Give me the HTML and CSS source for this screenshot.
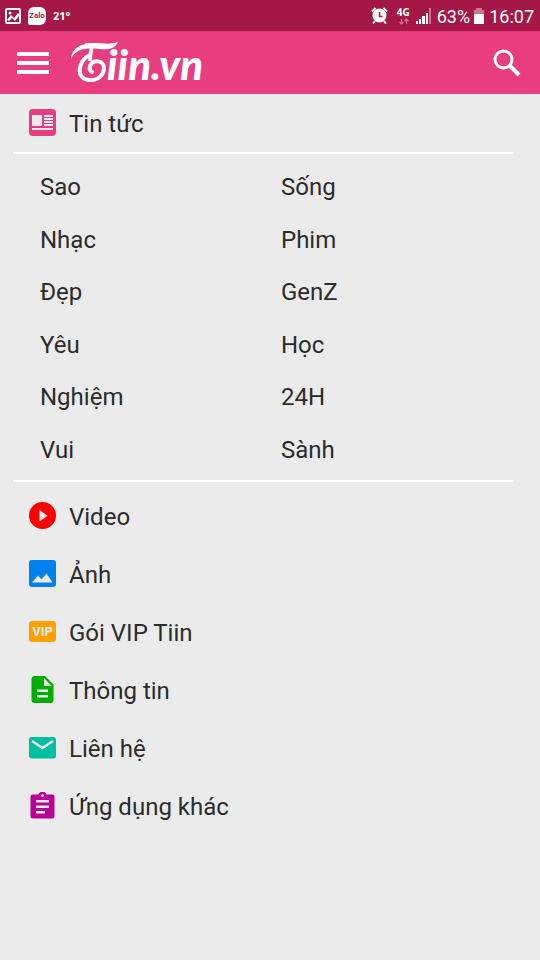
FILE: index.html
```html
<!DOCTYPE html>
<html lang="vi">
<head>
<meta charset="utf-8">
<meta name="viewport" content="width=device-width, initial-scale=1">
<title>Tiin.vn</title>
<link rel="stylesheet" href="styles.css">
</head>
<body>
<div class="status">
  <svg class="status-photo" viewBox="0 0 16 16" width="16" height="16" aria-hidden="true"><rect x="1" y="1" width="14" height="14" rx="1" fill="none" stroke="#fff" stroke-width="2"/><circle cx="5" cy="5" r="1.500" fill="#fff"/><path d="M2 12l4-5 3 3 4-5 1 1v2l-4 5-3-3-3 3z" fill="#fff"/></svg>
  <span class="zalo">Zalo</span>
  <span class="temp">21°</span>
  <span class="spacer"></span>
  <svg class="alarm" viewBox="0 0 17 17" width="17" height="17" aria-hidden="true"><circle cx="8.500" cy="8.500" r="7" fill="#fff"/><path d="M1 4.500L4.500 1M16 4.500L12.500 1M4 14l-2 2.500M13 14l2 2.500" stroke="#fff" stroke-width="2" fill="none"/><path d="M8.500 5v4.500h3" stroke="#a51747" stroke-width="1.500" fill="none"/></svg>
  <span class="network">4G
    <svg viewBox="0 0 12 7" width="12" height="7" aria-hidden="true"><path d="M3.500 1v5M1.500 4l2 2 2-2M8.500 6V1M6.500 3l2-2 2 2" stroke="#cb7794" stroke-width="1.200" fill="none"/></svg>
  </span>
  <svg class="signal" viewBox="0 0 16 16" width="16" height="16" aria-hidden="true"><path fill="#fff" d="M0 13h2v3H0zM3 11h2v5H3zM6 8h3v8H6zM10 5h2v11h-2z"/><path fill="#cb7794" d="M13 0h2v16h-2z"/></svg>
  <span class="level">63%</span>
  <svg class="battery" viewBox="0 0 10 16" width="10" height="16" aria-hidden="true"><path fill="#cb7794" d="M2 0h6v2h2v5H0V2h2z"/><path fill="#fff" d="M0 6h10v10H0z"/></svg>
  <span class="clock">16:07</span>
</div>
<header class="bar">
  <button class="icon-button" type="button" aria-label="Menu"><svg viewBox="0 0 32 22" width="32" height="22"><path fill="#fff" d="M0 0h32v4H0zM0 9h32v4H0zM0 18h32v4H0z"/></svg></button>
  <a class="logo" href="#">
    <svg viewBox="0 0 136 50" width="136" height="50" aria-label="Tiin.vn">
      <path fill="#fff" d="M1 21C2 9 12 6 22 5c10 0 18 2 26-1-3 7-10 8-19 7C17 10 6 10 1 21z"/>
      <path d="M20 17C8 22 5 41 19 42c10 1 15-6 15-12 0-8-11-9-14-2-1 3 0 5 2 6" fill="none" stroke="#fff" stroke-width="4" stroke-linecap="round"/>
      <text class="logo-initial" x="14" y="23">T</text>
      <text class="logo-text" x="37" y="42">iin.vn</text>
    </svg>
  </a>
  <button class="icon-button" type="button" aria-label="Tìm kiếm"><svg viewBox="0 0 28 28" width="28" height="28"><circle cx="10.500" cy="10.500" r="8.500" fill="none" stroke="#fff" stroke-width="3"/><path d="M16.500 16.500l9.500 9.500" stroke="#fff" stroke-width="4"/></svg></button>
</header>
<main>
  <nav>
    <a class="row" href="#"><svg viewBox="0 0 27 27" width="27" height="27"><rect width="27" height="27" rx="4" fill="#e83b80"/><path fill="#ebebeb" d="M3 6h10v11H3zM15 6h9v2h-9zM15 9h9v2h-9zM15 12h9v2h-9zM15 15h9v2h-9zM3 19h21v2H3z"/></svg>Tin tức</a>
    <div class="topics">
      <a href="#">Sao</a><a href="#">Sống</a>
      <a href="#">Nhạc</a><a href="#">Phim</a>
      <a href="#">Đẹp</a><a href="#">GenZ</a>
      <a href="#">Yêu</a><a href="#">Học</a>
      <a href="#">Nghiệm</a><a href="#">24H</a>
      <a href="#">Vui</a><a href="#">Sành</a>
    </div>
    <div class="sections">
      <a class="row" href="#"><svg viewBox="0 0 27 27" width="27" height="27"><circle cx="13.500" cy="13.500" r="13.500" fill="#f00"/><path d="M10.500 8v11.500l8-5.700z" fill="#ebebeb"/></svg>Video</a>
      <a class="row" href="#"><svg viewBox="0 0 27 27" width="27" height="27"><rect width="27" height="27" rx="3" fill="#0080ed"/><path d="M3 22.500l6-7 3.500 4 5-6 6 9z" fill="#ebebeb"/></svg>Ảnh</a>
      <a class="row" href="#"><svg viewBox="0 0 27 27" width="27" height="27"><rect y="3" width="27" height="21" rx="3" fill="#ffa000"/><text class="vip" x="13.500" y="18" text-anchor="middle">VIP</text></svg>Gói VIP Tiin</a>
      <a class="row" href="#"><svg viewBox="0 0 27 27" width="27" height="27"><path d="M5 0h11l8.500 8.500V24a3 3 0 0 1-3 3h-16a3 3 0 0 1-3-3V3a3 3 0 0 1 2.500-3z" fill="#00ae00"/><path d="M15 2v8h7.500zM8 13.500h11v2.500H8zM8 19h11v2.500H8z" fill="#ebebeb"/></svg>Thông tin</a>
      <a class="row" href="#"><svg viewBox="0 0 27 27" width="27" height="27"><rect y="3" width="27" height="21.500" rx="3" fill="#00bfa0"/><path d="M3 7l10.500 7L24 7" fill="none" stroke="#ebebeb" stroke-width="2.400"/></svg>Liên hệ</a>
      <a class="row" href="#"><svg viewBox="0 0 27 27" width="27" height="27"><path d="M4 2.500h5.500a4.200 4.200 0 0 1 8 0H23a2.500 2.500 0 0 1 2.500 2.500v19a2.500 2.500 0 0 1-2.500 2.500H4A2.500 2.500 0 0 1 1.500 24V5A2.500 2.500 0 0 1 4 2.500z" fill="#ba0097"/><circle cx="13.500" cy="3.700" r="1.400" fill="#ebebeb"/><path d="M7 8h13v2.500H7zM7 13.500h13V16H7zM7 19h9v2.500H7z" fill="#ebebeb"/></svg>Ứng dụng khác</a>
    </div>
  </nav>
</main>
</body>
</html>
```
FILE: styles.css
```css
* { box-sizing: border-box; }

body {
  margin: 0;
  min-height: 100vh;
  background: #ebebeb;
  color: #2b2b2b;
  font-family: Roboto, "Noto Sans", sans-serif;
  font-size: 24px;
  line-height: 28px;
}

a { color: inherit; text-decoration: none; }
svg { display: block; flex: none; }

.status {
  display: flex;
  align-items: center;
  height: 31px;
  padding: 0 6px 0 5px;
  background: #a51747;
  color: #fff;
  font-size: 18px;
  line-height: 24px;
}

.zalo {
  margin: 0 7px;
  width: 18px;
  height: 18px;
  border-radius: 6px 6px 6px 2px;
  background: #fff;
  color: #a51747;
  font-size: 8px;
  font-weight: 700;
  line-height: 17px;
  text-align: center;
}

.temp { font: 700 11px/16px "Open Sans", sans-serif; }
.spacer { flex: 1; }

.network {
  margin: 0 6px 0 9px;
  font: 700 10px/10px "Open Sans", sans-serif;
}

.network svg { margin: 1px 0 0 1px; }
.level { margin: 2px 4px 0 5px; }
.clock { margin: 2px 0 0 5px; }

.bar {
  display: flex;
  align-items: center;
  height: 63px;
  padding: 0 19px 0 17px;
  background: #e83e80;
}

.icon-button {
  display: flex;
  padding: 0;
  border: 0;
  background: none;
}

.logo { margin: 0 auto 0 21px; }

.logo-initial,
.logo-text {
  fill: #fff;
  font-family: Lato, sans-serif;
  font-style: italic;
  font-weight: 900;
}

.logo-initial { font-size: 24px; }
.logo-text { font-size: 42px; }

.row {
  display: flex;
  align-items: center;
  gap: 13px;
  min-height: 58px;
  padding: 2px 29px 0;
}

.row svg { margin-bottom: 3px; }

.topics {
  display: grid;
  grid-template-columns: 1fr 1fr;
  grid-auto-rows: 1fr;
  align-items: center;
  column-gap: 8px;
  box-sizing: content-box;
  min-height: 315px;
  margin: 0 26px 0 13px;
  padding: 7px 0 4px 27px;
  border: solid #fff;
  border-width: 2px 0;
}

.sections { padding-top: 5px; }

.vip {
  fill: #ebebeb;
  font: 700 13px Roboto, sans-serif;
}
```
